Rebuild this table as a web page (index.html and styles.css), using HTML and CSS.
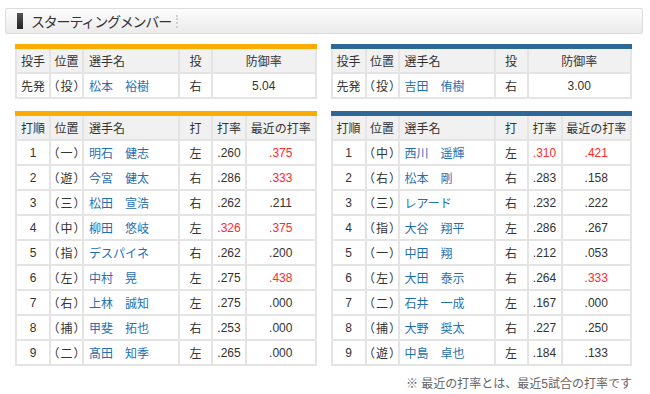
FILE: index.html
```html
<!DOCTYPE html>
<html lang="ja">
<head>
<meta charset="utf-8">
<link rel="stylesheet" href="styles.css">
</head>
<body>
<div class="title"><span class="mark"></span><span class="title-text">スターティングメンバー</span><span class="dots"></span></div>
<div class="grid">
  <table class="tbl home">
    <colgroup><col class="c1"><col class="c2"><col class="c3"><col class="c4"><col></colgroup>
    <tr class="head"><td>投手</td><td>位置</td><td class="l">選手名</td><td>投</td><td>防御率</td></tr>
    <tr><td>先発</td><td><span class="lp">（</span>投<span class="rp">）</span></td><td class="l name">松本　裕樹</td><td>右</td><td>5.04</td></tr>
  </table>
  <table class="tbl away">
    <colgroup><col class="c1"><col class="c2"><col class="c3"><col class="c4"><col></colgroup>
    <tr class="head"><td>投手</td><td>位置</td><td class="l">選手名</td><td>投</td><td>防御率</td></tr>
    <tr><td>先発</td><td><span class="lp">（</span>投<span class="rp">）</span></td><td class="l name">吉田　侑樹</td><td>右</td><td>3.00</td></tr>
  </table>
  <table class="tbl home">
    <colgroup><col class="c1"><col class="c2"><col class="c3"><col class="c4"><col class="c5"><col></colgroup>
    <tr class="head"><td>打順</td><td>位置</td><td class="l">選手名</td><td>打</td><td>打率</td><td>最近の打率</td></tr>
    <tr><td>1</td><td><span class="lp">（</span>一<span class="rp">）</span></td><td class="l name">明石　健志</td><td>左</td><td>.260</td><td class="red">.375</td></tr>
    <tr><td>2</td><td><span class="lp">（</span>遊<span class="rp">）</span></td><td class="l name">今宮　健太</td><td>右</td><td>.286</td><td class="red">.333</td></tr>
    <tr><td>3</td><td><span class="lp">（</span>三<span class="rp">）</span></td><td class="l name">松田　宣浩</td><td>右</td><td>.262</td><td>.211</td></tr>
    <tr><td>4</td><td><span class="lp">（</span>中<span class="rp">）</span></td><td class="l name">柳田　悠岐</td><td>左</td><td class="red">.326</td><td class="red">.375</td></tr>
    <tr><td>5</td><td><span class="lp">（</span>指<span class="rp">）</span></td><td class="l name">デスパイネ</td><td>右</td><td>.262</td><td>.200</td></tr>
    <tr><td>6</td><td><span class="lp">（</span>左<span class="rp">）</span></td><td class="l name">中村　晃</td><td>左</td><td>.275</td><td class="red">.438</td></tr>
    <tr><td>7</td><td><span class="lp">（</span>右<span class="rp">）</span></td><td class="l name">上林　誠知</td><td>左</td><td>.275</td><td>.000</td></tr>
    <tr><td>8</td><td><span class="lp">（</span>捕<span class="rp">）</span></td><td class="l name">甲斐　拓也</td><td>右</td><td>.253</td><td>.000</td></tr>
    <tr><td>9</td><td><span class="lp">（</span>二<span class="rp">）</span></td><td class="l name">髙田　知季</td><td>左</td><td>.265</td><td>.000</td></tr>
  </table>
  <table class="tbl away">
    <colgroup><col class="c1"><col class="c2"><col class="c3"><col class="c4"><col class="c5"><col></colgroup>
    <tr class="head"><td>打順</td><td>位置</td><td class="l">選手名</td><td>打</td><td>打率</td><td>最近の打率</td></tr>
    <tr><td>1</td><td><span class="lp">（</span>中<span class="rp">）</span></td><td class="l name">西川　遥輝</td><td>左</td><td class="red">.310</td><td class="red">.421</td></tr>
    <tr><td>2</td><td><span class="lp">（</span>右<span class="rp">）</span></td><td class="l name">松本　剛</td><td>右</td><td>.283</td><td>.158</td></tr>
    <tr><td>3</td><td><span class="lp">（</span>三<span class="rp">）</span></td><td class="l name">レアード</td><td>右</td><td>.232</td><td>.222</td></tr>
    <tr><td>4</td><td><span class="lp">（</span>指<span class="rp">）</span></td><td class="l name">大谷　翔平</td><td>左</td><td>.286</td><td>.267</td></tr>
    <tr><td>5</td><td><span class="lp">（</span>一<span class="rp">）</span></td><td class="l name">中田　翔</td><td>右</td><td>.212</td><td>.053</td></tr>
    <tr><td>6</td><td><span class="lp">（</span>左<span class="rp">）</span></td><td class="l name">大田　泰示</td><td>右</td><td>.264</td><td class="red">.333</td></tr>
    <tr><td>7</td><td><span class="lp">（</span>二<span class="rp">）</span></td><td class="l name">石井　一成</td><td>左</td><td>.167</td><td>.000</td></tr>
    <tr><td>8</td><td><span class="lp">（</span>捕<span class="rp">）</span></td><td class="l name">大野　奨太</td><td>右</td><td>.227</td><td>.250</td></tr>
    <tr><td>9</td><td><span class="lp">（</span>遊<span class="rp">）</span></td><td class="l name">中島　卓也</td><td>左</td><td>.184</td><td>.133</td></tr>
  </table>
</div>
<p class="note">※ 最近の打率とは、最近5試合の打率です</p>
</body>
</html>
```
FILE: styles.css
```css
html, body {
  margin: 0;
  padding: 0;
  background: #fff;
}
body {
  padding: 8px 7px 0 5px;
  font-family: "Liberation Sans", "Noto Sans CJK JP", sans-serif;
  color: #333;
  font-size: 12px;
}
.title {
  height: 24px;
  border: 1px solid #dcdcdc;
  border-radius: 2px;
  background: linear-gradient(#fcfcfc, #ebebeb);
  display: flex;
  align-items: center;
  padding-left: 11px;
}
.mark {
  width: 6px;
  height: 16px;
  background: linear-gradient(#555, #222);
}
.title-text {
  margin-left: 8px;
  font-size: 14px;
  color: #333;
  letter-spacing: -1.2px;
}
.dots {
  margin-left: 5px;
  width: 0;
  height: 13px;
  border-left: 2px dotted #cfcfcf;
}
.grid {
  display: grid;
  grid-template-columns: 1fr 1fr;
  column-gap: 14px;
  row-gap: 12px;
  padding: 10px 11px 0 10px;
}
.tbl {
  width: 100%;
  border-collapse: collapse;
  table-layout: fixed;
}
.tbl.home { border-top: 5px solid #fcab00; }
.tbl.away { border-top: 5px solid #2f6797; }
.tbl td {
  border: 2px solid #e4e4e4;
  height: 23px;
  padding: 0;
  text-align: center;
  white-space: nowrap;
}
.tbl tr.head td { background: #f1f1f1; }
.tbl td.l { text-align: left; padding-left: 5px; }
.tbl .lp { margin-left: -5px; margin-right: 1px; }
.tbl .rp { margin-left: 1px; margin-right: -5px; }
.tbl td.name { color: #1f6fb2; }
.tbl td.red { color: #ff2a2a; }
col.c1 { width: 34px; }
col.c2 { width: 33px; }
col.c3 { width: 96px; }
col.c4 { width: 33px; }
col.c5 { width: 34px; }
.note {
  margin: 8px 0 0 0;
  padding-right: 11px;
  text-align: right;
  color: #666;
  font-size: 12px;
}
```
